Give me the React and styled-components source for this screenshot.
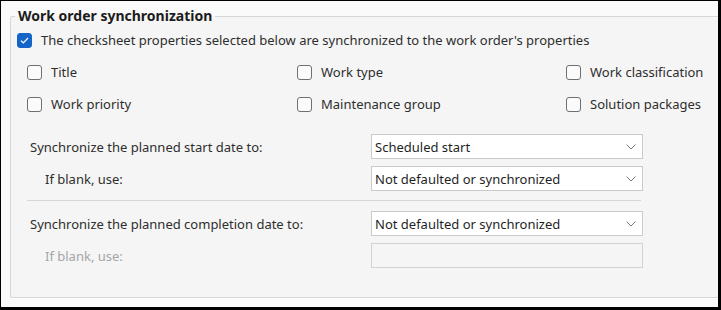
import React from 'react'
import styled, { createGlobalStyle } from 'styled-components'

const GlobalStyle = createGlobalStyle`
  html, body {
    margin: 0;
    padding: 0;
    background: #000;
  }
  body {
    font-family: "Noto Sans", "Liberation Sans", sans-serif;
    font-size: 13px;
    color: #2e2e2e;
  }
`

const Frame = styled.div`
  width: 717px;
  height: 306px;
  margin: 1px 3px 3px 1px;
  padding: 7px 0 0 9px;
  box-sizing: border-box;
  background: #fafafa;
  overflow: hidden;
`

const Group = styled.fieldset`
  margin: 0 -4px 0 0;
  padding: 0 0 0 6px;
  height: 290px;
  box-sizing: border-box;
  border: 1px solid #d3d7dc;
  border-radius: 2px;
  background: #f5f5f5;
  box-shadow: 1px 1px 0 #fff;
`

const Legend = styled.legend`
  padding: 0 3px;
  margin-left: -2px;
  font-weight: 700;
  font-size: 14px;
  line-height: 16px;
  color: #1c1c1c;
`

const CheckRow = styled.label`
  display: flex;
  align-items: center;
  gap: 9px;
  height: 16px;
  white-space: nowrap;
`

const Box = styled.span`
  width: 15px;
  height: 15px;
  box-sizing: border-box;
  border-radius: 3px;
  flex: none;
  display: flex;
  align-items: center;
  justify-content: center;
  background: ${p => (p.$checked ? '#1565c8' : '#fbfbfb')};
  border: 1px solid ${p => (p.$checked ? '#1565c8' : '#6f6f6f')};
`

const Master = styled.div`
  margin-top: 8px;
`

const OptionGrid = styled.div`
  display: grid;
  grid-template-columns: 270px 269px auto;
  row-gap: 16px;
  margin-top: 16px;
  padding-left: 10px;
`

const DateSection = styled.div`
  margin-top: 22px;
  padding-left: 10px;
  width: 624px;
`

const DateGrid = styled.div`
  display: grid;
  grid-template-columns: 344px 272px;
  grid-auto-rows: 25px;
  row-gap: 7px;
  align-items: center;
`

const FieldLabel = styled.div`
  padding-left: ${p => (p.$sub ? '18px' : '3px')};
  color: ${p => (p.$disabled ? '#a5a5a5' : '#2e2e2e')};
  white-space: nowrap;
`

const Select = styled.div`
  height: 25px;
  box-sizing: border-box;
  display: flex;
  align-items: center;
  justify-content: space-between;
  padding: 0 6px 0 3px;
  border: 1px solid ${p => (p.$disabled ? '#d2d2d2' : '#cbcbcb')};
  background: ${p => (p.$disabled ? '#f5f5f5' : '#fff')};
  color: #1f1f1f;
  white-space: nowrap;
`

const Divider = styled.hr`
  margin: 9px 0 10px;
  width: 614px;
  border: none;
  border-top: 1px solid #d3d7dc;
  height: 0;
`

const Check = () => (
  <svg width="9" height="7" viewBox="0 0 9 7">
    <polyline points="1,3.6 3.3,5.8 8,1" fill="none" stroke="#fff" strokeWidth="1.2" />
  </svg>
)

const Chevron = () => (
  <svg width="10" height="6" viewBox="0 0 10 6">
    <polyline points="0.5,0.5 5,5 9.5,0.5" fill="none" stroke="#7a7a7a" strokeWidth="1" />
  </svg>
)

const Option = ({ label, checked }) => (
  <CheckRow>
    <Box $checked={checked}>{checked && <Check />}</Box>
    {label}
  </CheckRow>
)

const DateRow = ({ label, value, sub, disabled }) => (
  <>
    <FieldLabel $sub={sub} $disabled={disabled}>{label}</FieldLabel>
    <Select $disabled={disabled}>
      {value}
      {!disabled && <Chevron />}
    </Select>
  </>
)

const options = [
  'Title',
  'Work type',
  'Work classification',
  'Work priority',
  'Maintenance group',
  'Solution packages',
]

export default function App() {
  return (
    <>
      <GlobalStyle />
      <Frame>
        <Group>
          <Legend>Work order synchronization</Legend>
          <Master>
            <Option checked label="The checksheet properties selected below are synchronized to the work order's properties" />
          </Master>
          <OptionGrid>
            {options.map(o => (
              <Option key={o} label={o} />
            ))}
          </OptionGrid>
          <DateSection>
            <DateGrid>
              <DateRow label="Synchronize the planned start date to:" value="Scheduled start" />
              <DateRow sub label="If blank, use:" value="Not defaulted or synchronized" />
            </DateGrid>
            <Divider />
            <DateGrid>
              <DateRow label="Synchronize the planned completion date to:" value="Not defaulted or synchronized" />
              <DateRow sub disabled label="If blank, use:" value="" />
            </DateGrid>
          </DateSection>
        </Group>
      </Frame>
    </>
  )
}
